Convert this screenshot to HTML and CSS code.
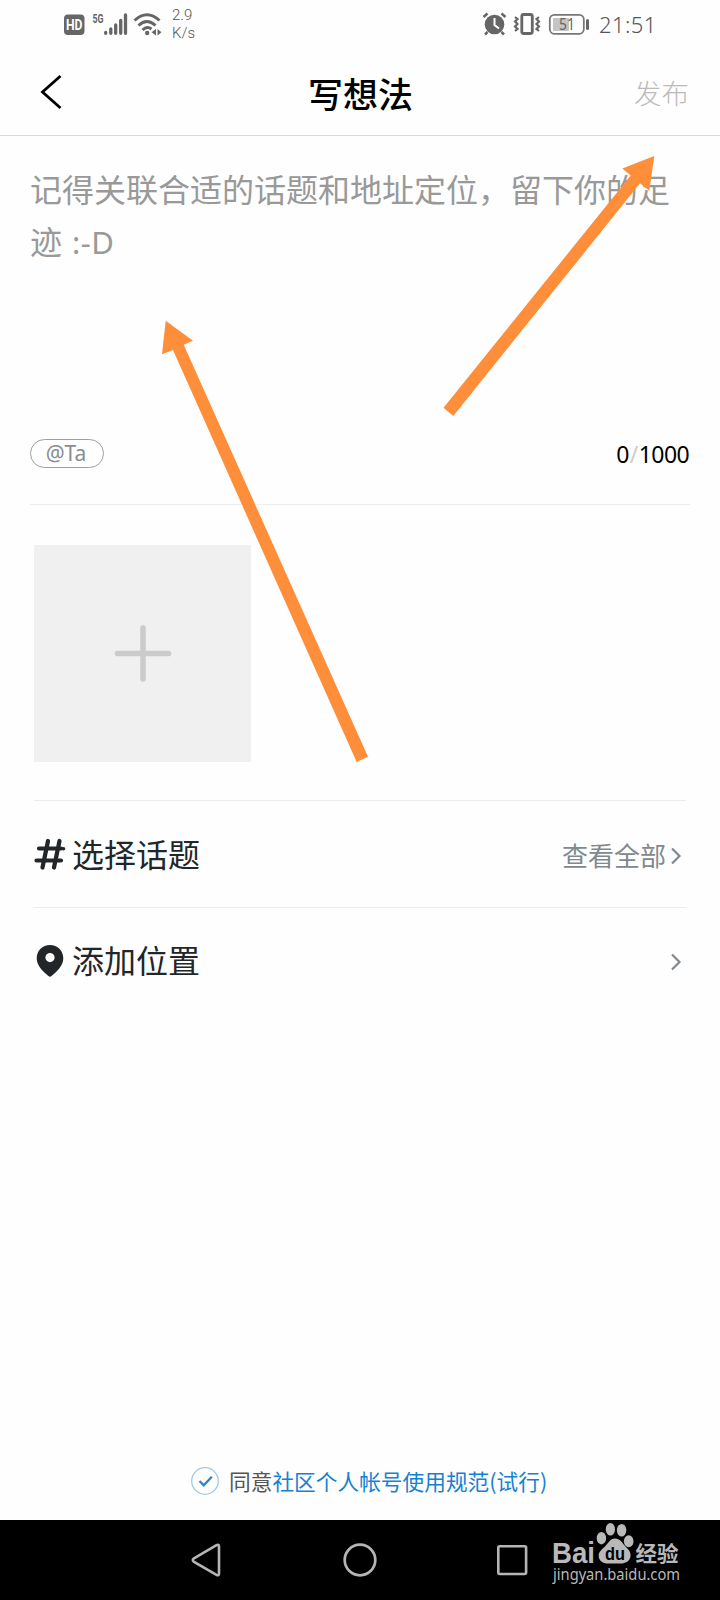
FILE: index.html
```
<!DOCTYPE html>
<html lang="zh-CN">
<head>
<meta charset="utf-8">
<title>写想法</title>
<link rel="stylesheet" href="styles.css">
</head>
<body>
<div class="screen">
  <div class="status">
    <svg class="signals" width="104" height="50" viewBox="60 0 104 50">
      <rect x="64" y="14.500" width="20.500" height="20.500" rx="4" fill="#666"/>
      <text x="66" y="30" class="hd" textLength="16.500" lengthAdjust="spacingAndGlyphs">HD</text>
      <text x="92.500" y="22.500" class="fiveg" textLength="11" lengthAdjust="spacingAndGlyphs">5G</text>
      <g stroke="#666" stroke-width="3.300" stroke-linecap="round">
        <path d="M105.700 32.500v.8M110.800 29v4.300M115.700 25v8.300M120.700 20.500v12.800M125.500 15v18.300"/>
      </g>
      <g fill="none" stroke="#666" stroke-width="3">
        <path d="M134.500 20.500Q147 9 159.500 20.500M138.500 25.500Q147 17.500 155.500 25.500M142.500 30Q147 25.500 151.500 29"/>
      </g>
      <circle cx="147.200" cy="33" r="2.200" fill="#666"/>
      <path d="M156 29v6.500l-4.500-3.200zM157.500 29v6.500l4-3.200z" fill="#666"/>
    </svg>
    <div class="speed"><span>2.9</span><span>K/s</span></div>
    <svg class="indicators" width="112" height="50" viewBox="480 0 112 50">
      <circle cx="494.500" cy="24.500" r="9.800" fill="#666"/>
      <path d="M494.500 18v7l4.500 3.500" fill="none" stroke="#fff" stroke-width="2"/>
      <path d="M483.500 17l4-3.500M505.500 17l-4-3.500M487.500 32l-2.500 2.500M501.500 32l2.500 2.500" stroke="#666" stroke-width="2.500"/>
      <rect x="521.800" y="14.500" width="10.500" height="19" rx="2" fill="none" stroke="#666" stroke-width="2.800"/>
      <path d="M515 17l2.500 2-2.500 2.500 2.500 2.500-2.500 2.500 2.500 2.500-2.500 2M539 17l-2.500 2 2.500 2.500-2.500 2.500 2.500 2.500-2.500 2.500 2.500 2" fill="none" stroke="#666" stroke-width="2.200"/>
      <rect x="549.800" y="14.800" width="34" height="19" rx="4.500" fill="#fff" stroke="#777" stroke-width="1.800"/>
      <rect x="553" y="18" width="16" height="13" rx="1" fill="#c4c4c4"/>
      <text x="559" y="30" class="level" textLength="16" lengthAdjust="spacingAndGlyphs">51</text>
      <path d="M587.500 20.500v8" stroke="#666" stroke-width="3" stroke-linecap="round"/>
    </svg>
    <span class="clock">21:51</span>
  </div>

  <header class="header">
    <svg class="back" width="24" height="38" viewBox="0 0 24 38"><path d="M21.500 3 3.500 19 21.500 35" fill="none" stroke="#000" stroke-width="2.800"/></svg>
    <h1 class="title">写想法</h1>
    <span class="publish">发布</span>
  </header>

  <section class="editor">
    <p class="placeholder">记得关联合适的话题和地址定位，留下你的足<br>迹<span class="smile">:-D</span></p>
    <div class="tools">
      <span class="mention">@Ta</span>
      <span class="count">0<i class="slash">/</i>1000</span>
    </div>
  </section>

  <section class="media">
    <div class="add">
      <svg width="60" height="60" viewBox="0 0 60 60"><path d="M30 4v51M4.500 29.500h51" stroke="#cbcbcb" stroke-width="5.500" stroke-linecap="round"/></svg>
    </div>
  </section>

  <div class="row">
    <svg class="row-icon" width="32" height="34" viewBox="34 837 32 34"><path d="M48 841l-5.500 26.500M59.500 841 54 867.500M39 848.500h22M36.500 860.500H61" fill="none" stroke="#222629" stroke-width="4.200" stroke-linecap="round"/><circle cx="63.500" cy="848.800" r="1.800" fill="#222629"/></svg>
    <span class="row-label">选择话题</span>
    <span class="row-more">查看全部</span>
    <svg class="chevron" width="12" height="20" viewBox="0 0 12 20"><path d="M2 2.500l7.500 7.500L2 17.500" fill="none" stroke="#81898e" stroke-width="2.200"/></svg>
  </div>
  <div class="row row-place">
    <svg class="row-icon" width="32" height="34" viewBox="34 944 32 34"><path fill="#222629" fill-rule="evenodd" d="M50 945c-7.600 0-13.300 5.800-13.300 13.300 0 8.200 7.800 14.200 11.700 17.800q1.600 1.500 3.200 0c3.900-3.600 11.700-9.600 11.700-17.800C63.300 950.800 57.600 945 50 945zm0 8a4.600 4.600 0 1 1 0 9.200 4.600 4.600 0 0 1 0-9.200z"/></svg>
    <span class="row-label">添加位置</span>
    <svg class="chevron" width="12" height="20" viewBox="0 0 12 20"><path d="M2 2.500l7.500 7.500L2 17.500" fill="none" stroke="#81898e" stroke-width="2.200"/></svg>
  </div>

  <div class="agree">
    <svg width="30" height="30" viewBox="0 0 30 30"><circle cx="15" cy="15" r="13.300" fill="none" stroke="#a0c8e8" stroke-width="1.300"/><path d="M9.500 15l4.300 4.300 8-8.500" fill="none" stroke="#3283c6" stroke-width="2.400"/></svg>
    <span class="agree-text">同意<a class="link">社区个人帐号使用规范(试行)</a></span>
  </div>

  <nav class="nav">
    <svg width="32" height="38" viewBox="190 1541 32 38"><path d="M216.500 1545.200Q219 1544 219 1546.500v27q0 2.500-2.500 1.300l-22.500-13q-2.500-1.700 0-3.500z" fill="none" stroke="#b5b5b5" stroke-width="2.600"/></svg>
    <svg width="36" height="38" viewBox="342 1541 36 38"><circle cx="360" cy="1560" r="15.300" fill="none" stroke="#b5b5b5" stroke-width="2.700"/></svg>
    <svg width="32" height="38" viewBox="496 1541 32 38"><rect x="498.300" y="1546.200" width="27.800" height="27.800" rx="1.500" fill="none" stroke="#b5b5b5" stroke-width="2.600"/></svg>
    <svg class="brand" width="136" height="72" viewBox="548 1520 136 72">
      <g fill="#b9b9b9">
        <text x="552" y="1562.500" class="bai" textLength="43" lengthAdjust="spacingAndGlyphs">Bai</text>
        <ellipse cx="601.400" cy="1538.200" rx="4.700" ry="6.200"/>
        <ellipse cx="610.400" cy="1529.300" rx="4.600" ry="6.300"/>
        <ellipse cx="621.600" cy="1530.200" rx="4.700" ry="6.300"/>
        <ellipse cx="628.700" cy="1541.300" rx="4.800" ry="6"/>
        <path d="M615 1538.500c5 0 7 4 10 7.500 4 4 6 6 5.500 10.500-.8 5-5.500 7-9.500 7h-13c-5 0-9.300-2.500-9.300-8 0-4 3.300-6 6.300-9 4-4 5-8 10-8z"/>
        <text x="635.500" y="1561" class="exp" textLength="43" lengthAdjust="spacingAndGlyphs">经验</text>
        <text x="553" y="1579.500" class="site" textLength="127" lengthAdjust="spacingAndGlyphs">jingyan.baidu.com</text>
      </g>
      <text x="605" y="1560" class="du" textLength="20" lengthAdjust="spacingAndGlyphs">du</text>
    </svg>
  </nav>

  <svg class="arrows" width="720" height="1600" viewBox="0 0 720 1600" fill="#ff8e3b">
    <path d="M654.300 156 622.300 168.500l8.400 7L443.500 407.800l9.800 8.200L640 183.300l9.300 7.500z"/>
    <path d="M165.700 320.700 162 354.300l11-4.300L356.700 762l11.300-5.200L183.700 344.700l9.300-4z"/>
  </svg>
</div>
</body>
</html>
```
FILE: styles.css
```
* { box-sizing: border-box; }
body {
  margin: 0;
  background: #fff;
  font-family: "Noto Sans", "Noto Sans CJK SC", sans-serif;
}
svg { display: block; flex: none; }
.screen {
  position: relative;
  display: flex;
  flex-direction: column;
  width: 720px;
  height: 1600px;
  overflow: hidden;
  background: #fefefe;
}
.arrows { position: absolute; inset: 0; pointer-events: none; }

.status { display: flex; height: 50px; padding-left: 60px; color: #777; }
.hd { font: 700 14px Roboto, sans-serif; fill: #fff; }
.fiveg { font: 700 12.5px Roboto, sans-serif; fill: #666; }
.level { font: 16px "Noto Sans", sans-serif; fill: #666; }
.speed {
  display: flex;
  flex-direction: column;
  width: 30px;
  margin-left: 8px;
  padding-top: 6px;
  font: 300 15px/18px Roboto, sans-serif;
  color: #555;
}
.indicators { margin-left: 278px; }
.clock { margin-left: 7px; font: 300 22px/48px "Noto Sans", sans-serif; letter-spacing: .4px; color: #555; }

.header {
  display: grid;
  grid-template-columns: 100px 1fr 100px;
  align-items: center;
  height: 86px;
  border-bottom: 1px solid #d8dada;
}
.back { margin: -1px 0 0 39px; }
.title { margin: 1px 0 0 1px; text-align: center; color: #000; font: 500 35px/50px "Noto Sans CJK SC", sans-serif; }
.publish { font: 300 27.500px/40px "Noto Sans CJK SC", sans-serif; color: #bbb; margin-left: 14px; margin-top: -2px; }

.editor {
  display: flex;
  flex-direction: column;
  justify-content: space-between;
  height: 369px;
  margin: 0 30px;
  padding: 26px 0 35px;
  border-bottom: 1px solid #eceeee;
}
.placeholder {
  margin: 0;
  font: 32px/52px "Noto Sans CJK SC", sans-serif;
  color: #999;
  white-space: nowrap;
}
.smile { margin-left: 10px; font-family: "Noto Sans", sans-serif; font-size: 31px; letter-spacing: .5px; }
.tools { display: flex; align-items: center; justify-content: space-between; }
.mention {
  width: 74px;
  height: 29px;
  padding-right: 2px;
  border: 1px solid #9ba0a5;
  border-radius: 15px;
  text-align: center;
  font: 21px/27px "Noto Sans", sans-serif;
  color: #868d93;
}
.count { font: 23px/29px "Noto Sans", sans-serif; letter-spacing: -.6px; color: #000; padding: 2px 1px 0 0; }
.slash { font-style: normal; color: #ccc; margin: 0 1px; }

.media { height: 296px; margin: 0 34px; padding-top: 40px; border-bottom: 1px solid #eceeee; }
.add {
  display: flex;
  align-items: center;
  justify-content: center;
  width: 217px;
  height: 217px;
  background: #f0f0f0;
}

.row {
  display: flex;
  align-items: center;
  height: 107px;
  margin: 0 34px;
  border-bottom: 1px solid #eceeee;
}
.row-place { height: 105px; border-bottom: 0; }
.row-label { flex: 1; margin: -3px 0 0 6px; font: 32px/44px "Noto Sans CJK SC", sans-serif; color: #222629; }
.row-more { font: 26px/40px "Noto Sans CJK SC", sans-serif; color: #81898e; padding-top: 2px; }
.chevron { margin: 3px 4px 0 4px; }

.agree {
  display: flex;
  align-items: center;
  height: 30px;
  margin-top: auto;
  margin-bottom: 24px;
  padding-left: 190px;
}
.agree-text { margin-left: 9px; font: 21.700px/30px "Noto Sans CJK SC", sans-serif; color: #555; white-space: nowrap; }
.link { color: #1581d4; }

.nav { display: flex; align-items: center; height: 80px; padding-left: 190px; background: #000; }
.nav svg + svg { margin-left: 120px; }
.nav svg:nth-child(3) { margin-left: 118px; }
.nav .brand.brand { align-self: flex-start; margin-left: 20px; overflow: visible; }
.bai { font: 700 29px "Liberation Sans", sans-serif; }
.exp { font: 700 21px "Noto Sans CJK SC", sans-serif; }
.site { font: 16.500px "Noto Sans", sans-serif; }
.du { font: 700 18px "Liberation Sans", sans-serif; fill: #000; }
```
